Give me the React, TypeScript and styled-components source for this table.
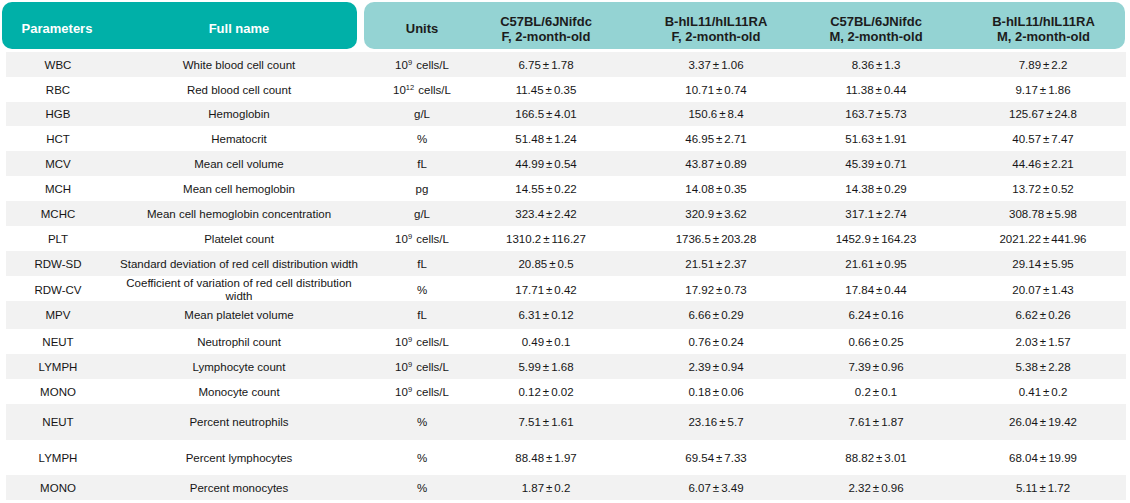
import React from 'react';
import styled, { createGlobalStyle } from 'styled-components';

const GlobalStyle = createGlobalStyle`
  body {
    margin: 0;
    background: #fff;
    font-family: "Liberation Sans", Arial, sans-serif;
  }
`;

const SPage = styled.div`
  padding-top: 2px;
`;

const SHeader = styled.div`
  display: flex;
  height: 47px;
`;

const SHeadBox = styled.div<{ $bg: string; $fg: string; $w: number; $ml: number }>`
  display: flex;
  width: ${({ $w }) => $w}px;
  margin-left: ${({ $ml }) => $ml}px;
  background: ${({ $bg }) => $bg};
  color: ${({ $fg }) => $fg};
  border-radius: 10px;
`;

const SHeadCell = styled.div<{ $w: number; $pl?: number }>`
  display: flex;
  align-items: center;
  justify-content: center;
  box-sizing: border-box;
  width: ${({ $w }) => $w}px;
  padding-top: 6px;
  padding-left: ${({ $pl }) => $pl ?? 0}px;
  text-align: center;
  font-size: 13px;
  line-height: 15px;
  font-weight: 700;
`;

const SBody = styled.div`
  margin: 3px 0 0 6px;
  width: 1120px;
`;

const SRow = styled.div<{ $h: number; $shade: boolean }>`
  display: grid;
  grid-template-columns: 104px 258px 108px 140px 200px 120px 190px;
  height: ${({ $h }) => $h}px;
  background: ${({ $shade }) => ($shade ? '#f2f2f2' : '#fff')};
`;

const SCell = styled.div<{ $pl?: number; $px?: number }>`
  display: flex;
  align-items: center;
  justify-content: center;
  padding: 1px ${({ $px }) => $px ?? 0}px 0;
  padding-left: ${({ $pl, $px }) => $pl ?? $px ?? 0}px;
  text-align: center;
  color: #161616;
  font-size: 11.5px;
  line-height: 13px;
`;

const SSup = styled.sup`
  font-size: 7.5px;
  line-height: 0;
  vertical-align: 4px;
  margin-right: 1px;
`;

const SPm = styled.span`
  margin: 0 2px;
`;

type Row = [string, string, string, string, string, string, string, number];

const rows: Row[] = [
  ['WBC', 'White blood cell count', '10^9 cells/L', '6.75±1.78', '3.37±1.06', '8.36±1.3', '7.89±2.2', 25],
  ['RBC', 'Red blood cell count', '10^12 cells/L', '11.45±0.35', '10.71±0.74', '11.38±0.44', '9.17±1.86', 25],
  ['HGB', 'Hemoglobin', 'g/L', '166.5±4.01', '150.6±8.4', '163.7±5.73', '125.67±24.8', 24],
  ['HCT', 'Hematocrit', '%', '51.48±1.24', '46.95±2.71', '51.63±1.91', '40.57±7.47', 25],
  ['MCV', 'Mean cell volume', 'fL', '44.99±0.54', '43.87±0.89', '45.39±0.71', '44.46±2.21', 25],
  ['MCH', 'Mean cell hemoglobin', 'pg', '14.55±0.22', '14.08±0.35', '14.38±0.29', '13.72±0.52', 25],
  ['MCHC', 'Mean cell hemoglobin concentration', 'g/L', '323.4±2.42', '320.9±3.62', '317.1±2.74', '308.78±5.98', 25],
  ['PLT', 'Platelet count', '10^9 cells/L', '1310.2±116.27', '1736.5±203.28', '1452.9±164.23', '2021.22±441.96', 25],
  ['RDW-SD', 'Standard deviation of red cell distribution width', 'fL', '20.85±0.5', '21.51±2.37', '21.61±0.95', '29.14±5.95', 25],
  ['RDW-CV', 'Coefficient of variation of red cell distribution width', '%', '17.71±0.42', '17.92±0.73', '17.84±0.44', '20.07±1.43', 25],
  ['MPV', 'Mean platelet volume', 'fL', '6.31±0.12', '6.66±0.29', '6.24±0.16', '6.62±0.26', 28],
  ['NEUT', 'Neutrophil count', '10^9 cells/L', '0.49±0.1', '0.76±0.24', '0.66±0.25', '2.03±1.57', 25],
  ['LYMPH', 'Lymphocyte count', '10^9 cells/L', '5.99±1.68', '2.39±0.94', '7.39±0.96', '5.38±2.28', 25],
  ['MONO', 'Monocyte count', '10^9 cells/L', '0.12±0.02', '0.18±0.06', '0.2±0.1', '0.41±0.2', 25],
  ['NEUT', 'Percent neutrophils', '%', '7.51±1.61', '23.16±5.7', '7.61±1.87', '26.04±19.42', 36],
  ['LYMPH', 'Percent lymphocytes', '%', '88.48±1.97', '69.54±7.33', '88.82±3.01', '68.04±19.99', 35],
  ['MONO', 'Percent monocytes', '%', '1.87±0.2', '6.07±3.49', '2.32±0.96', '5.11±1.72', 25],
];

const Unit = ({ text }: { text: string }) => {
  const m = text.match(/^10\^(\d+)(.*)$/);
  if (!m) return <>{text}</>;
  return (
    <span>
      10<SSup>{m[1]}</SSup>
      {m[2]}
    </span>
  );
};

const Value = ({ text }: { text: string }) => {
  const [a, b] = text.split('±');
  return (
    <span>
      {a}
      <SPm>±</SPm>
      {b}
    </span>
  );
};

export default function App() {
  return (
    <SPage>
      <GlobalStyle />
      <SHeader>
        <SHeadBox $bg="#00b0a8" $fg="#fff" $w={355} $ml={2}>
          <SHeadCell $w={110}>Parameters</SHeadCell>
          <SHeadCell $w={245} $pl={9}>Full name</SHeadCell>
        </SHeadBox>
        <SHeadBox $bg="#94d3d3" $fg="#1c1c1c" $w={761} $ml={7}>
          <SHeadCell $w={116}>Units</SHeadCell>
          <SHeadCell $w={132}>C57BL/6JNifdc<br />F, 2-month-old</SHeadCell>
          <SHeadCell $w={208}>B-hIL11/hIL11RA<br />F, 2-month-old</SHeadCell>
          <SHeadCell $w={112}>C57BL/6JNifdc<br />M, 2-month-old</SHeadCell>
          <SHeadCell $w={193} $pl={30}>B-hIL11/hIL11RA<br />M, 2-month-old</SHeadCell>
        </SHeadBox>
      </SHeader>
      <SBody>
        {rows.map((r, i) => (
          <SRow key={i} $h={r[7]} $shade={i % 2 === 0}>
            <SCell>{r[0]}</SCell>
            <SCell $px={6}>{r[1]}</SCell>
            <SCell><Unit text={r[2]} /></SCell>
            <SCell><Value text={r[3]} /></SCell>
            <SCell><Value text={r[4]} /></SCell>
            <SCell><Value text={r[5]} /></SCell>
            <SCell $pl={24}><Value text={r[6]} /></SCell>
          </SRow>
        ))}
      </SBody>
    </SPage>
  );
}
